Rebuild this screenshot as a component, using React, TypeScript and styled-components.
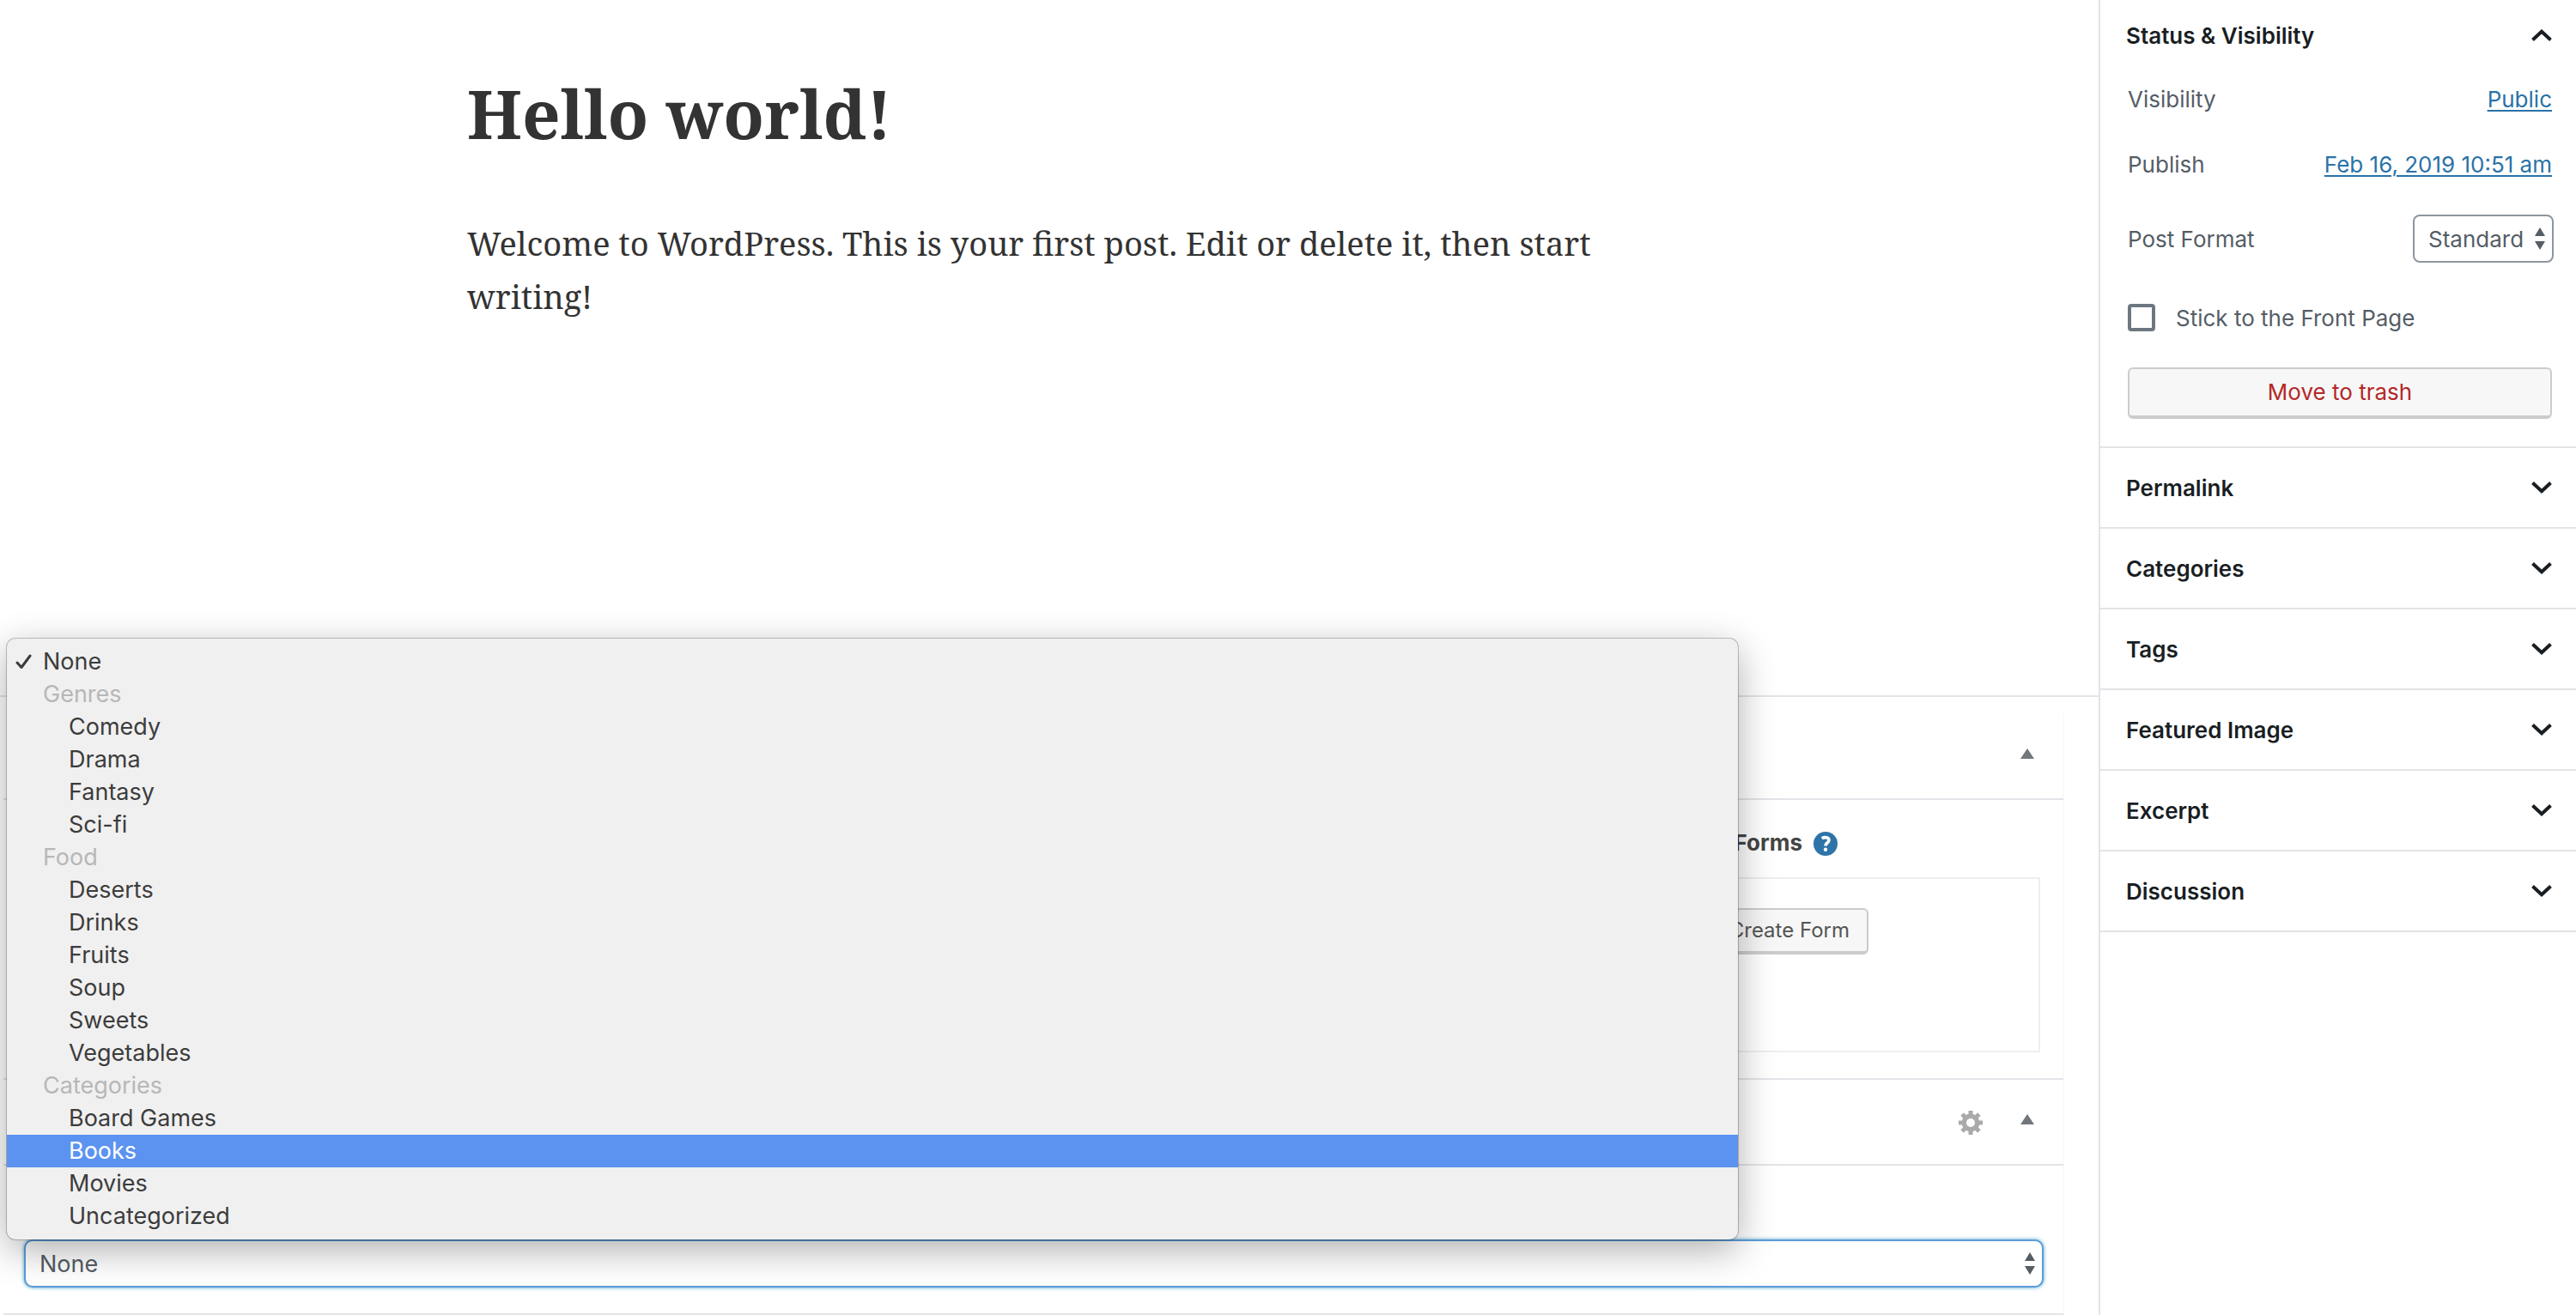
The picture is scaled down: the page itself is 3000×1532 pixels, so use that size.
import React, { useState } from "react";
import styled, { createGlobalStyle, css } from "styled-components";

const sans = `Inter, "Liberation Sans", sans-serif`;
const serif = `"Noto Serif", "DejaVu Serif", serif`;

const line = "#e2e4e7";

const GlobalStyle = createGlobalStyle`
  *, *::before, *::after { box-sizing: border-box; }
  body { margin: 0; background: #fff; font-family: ${sans}; color: #555d66; }
  button, select, input { font-family: inherit; margin: 0; }
`;

const Page = styled.div`
  display: flex;
  align-items: stretch;
  min-height: 100vh;
  overflow: hidden;
`;

const Main = styled.main`
  flex: 1;
  min-width: 0;
`;

const Editor = styled.article`
  min-height: 812px;
  padding: 70px 40px 0;
  border-bottom: 2px solid ${line};
`;

const EditorColumn = styled.div`
  max-width: 1356px;
  margin: 0 auto;
  font-family: ${serif};
  color: #333;
`;

const PostTitle = styled.h1`
  margin: 0;
  font-size: 78px;
  line-height: 124px;
  font-weight: 700;
`;

const Paragraph = styled.p`
  margin: 58px 0 0;
  font-size: 38px;
  line-height: 62px;
`;

const MetaBoxes = styled.div`
  margin: 20px 40px 0 4px;
  border-right: 1px solid #f6f6f8;
`;

const MetaBox = styled.section`
  border-bottom: 2px solid ${line};
`;

const MetaHeader = styled.header`
  display: flex;
  align-items: center;
  justify-content: flex-end;
  gap: 44px;
  height: 100px;
  padding: 0 34px 0 24px;
  border-bottom: 2px solid ${line};
`;

const IconButton = styled.button<{ $raised?: boolean }>`
  display: flex;
  padding: ${(p) => (p.$raised ? "0 0 6px" : "2px 0 0")};
  border: 0;
  background: none;
`;

const FormsBody = styled.div`
  padding: 36px 27px 30px 24px;
`;

const FormsTitle = styled.div`
  display: flex;
  align-items: center;
  justify-content: flex-end;
  gap: 13px;
  height: 28px;
  padding-right: 236px;
`;

const FormsHeading = styled.h2`
  margin: 0;
  font-size: 26px;
  line-height: 28px;
  font-weight: 700;
  color: #444;
`;

const FormsPanel = styled.div`
  display: flex;
  justify-content: flex-end;
  align-items: flex-start;
  height: 204px;
  margin-top: 26px;
  padding: 34px 198px 0 24px;
  border: 2px solid #eee;
`;

const Button = styled.button<{ $tone?: "danger" }>`
  height: 54px;
  padding: 0 20px;
  border: 2px solid #ccc;
  border-bottom-width: 4px;
  border-radius: 6px;
  background: #f7f7f7;
  color: #555;
  font-size: 24px;
  line-height: 30px;
  ${(p) =>
    p.$tone === "danger" &&
    css`
      width: 100%;
      height: 60px;
      color: #b52727;
      font-size: 26px;
    `}
`;

const TermBody = styled.div`
  padding: 86px 23px 30px 24px;
`;

const SelectWrap = styled.div`
  position: relative;
`;

const Select = styled.select<{ $focused?: boolean }>`
  display: block;
  appearance: none;
  width: 100%;
  height: 56px;
  padding: 0 32px 0 16px;
  border: 2px solid #8d96a0;
  border-radius: 8px;
  outline: 0;
  background: #fff;
  color: #555d66;
  font-size: 26px;
  ${(p) =>
    p.$focused &&
    css`
      border-color: #5b9dd9;
      border-radius: 10px;
      box-shadow: 0 0 4px rgba(30, 140, 190, 0.8);
      font-size: 27px;
    `}
`;

const SelectArrows = styled.svg`
  position: absolute;
  top: 15px;
  right: 9px;
  pointer-events: none;
`;

const Menu = styled.ul`
  position: absolute;
  left: -20px;
  right: 356px;
  bottom: 100%;
  margin: 0;
  padding: 8px 0;
  list-style: none;
  border-radius: 10px;
  background: #f0f0f0;
  box-shadow: 0 0 0 1px rgba(0, 0, 0, 0.22), 0 12px 44px rgba(0, 0, 0, 0.32);
  z-index: 2;
`;

const MenuItem = styled.li<{ $kind: "top" | "group" | "child"; $active?: boolean }>`
  display: flex;
  align-items: center;
  height: 38px;
  padding-left: ${(p) => (p.$kind === "child" ? 72 : p.$kind === "group" ? 42 : 10)}px;
  font-size: 27px;
  line-height: 38px;
  color: ${(p) => (p.$active ? "#fff" : p.$kind === "group" ? "#b7b7b7" : "#3c3c3c")};
  background: ${(p) => (p.$active ? "#5c93f0" : "transparent")};
`;

const CheckMark = styled.svg`
  margin-right: 13px;
`;

const Sidebar = styled.aside`
  flex: none;
  width: 556px;
  border-left: 2px solid ${line};
`;

const Panel = styled.section`
  border-bottom: 2px solid ${line};
`;

const PanelHeading = styled.h2`
  margin: 0;
`;

const PanelToggle = styled.button<{ $open?: boolean }>`
  display: flex;
  align-items: center;
  justify-content: space-between;
  width: 100%;
  height: ${(p) => (p.$open ? 82 : 92)}px;
  padding: 0 28px 0 30px;
  border: 0;
  background: none;
  color: #191e23;
  font-size: 26px;
  font-weight: 600;
  text-align: left;
`;

const PanelBody = styled.div`
  padding: 0 28px 32px 32px;
`;

const PanelRow = styled.div<{ $height: number }>`
  display: flex;
  align-items: center;
  justify-content: space-between;
  height: ${(p) => p.$height}px;
  font-size: 26px;
`;

const RowLink = styled.a`
  color: #2a72a8;
  text-decoration: underline;
  text-decoration-thickness: 2px;
  text-underline-offset: 3px;
`;

const FormatSelect = styled(SelectWrap)`
  width: 164px;
  margin-right: -2px;
`;

const CheckRow = styled.label`
  display: flex;
  align-items: center;
  gap: 24px;
  height: 96px;
  margin-bottom: 10px;
  font-size: 26px;
`;

const CheckBox = styled.input`
  appearance: none;
  width: 32px;
  height: 32px;
  border: 4px solid #6c7781;
  border-radius: 4px;
  background: #fff;
`;

const Chevron = ({ up }: { up?: boolean }) => (
  <svg width="24" height="14" viewBox="0 0 24 14" fill="none" stroke="#191e23" strokeWidth="4">
    <path d={up ? "M1.5 12.5L12 2.8L22.5 12.5" : "M1.5 1.5L12 11.2L22.5 1.5"} />
  </svg>
);

const Triangle = () => (
  <svg width="16" height="12" viewBox="0 0 16 12" fill="#72777c">
    <path d="M8 0L16 12H0Z" />
  </svg>
);

const Gear = () => (
  <svg width="28" height="28" viewBox="-14 -14 28 28">
    <g fill="#aaa">
      {[0, 45, 90, 135].map((a) => (
        <rect key={a} x="-2.5" y="-14" width="5" height="28" transform={`rotate(${a})`} />
      ))}
      <circle r="10.4" />
    </g>
    <circle r="5" fill="#fff" />
  </svg>
);

const HelpIcon = () => (
  <svg width="28" height="28" viewBox="0 0 28 28">
    <circle cx="14" cy="14" r="14" fill="#2e74a8" />
    <path d="M9.8 7.8C12.6 6 18 6.2 18 9.8C18 12.8 14 12.8 14 16.6" fill="none" stroke="#fff" strokeWidth="3.6" />
    <circle cx="14" cy="20.8" r="2.2" fill="#fff" />
  </svg>
);

const Arrows = () => (
  <SelectArrows width="14" height="26" viewBox="0 0 14 26" fill="#555d66">
    <path d="M7 0L13 10H1ZM1 16H13L7 26Z" />
  </SelectArrows>
);

const groups = [
  { label: "Genres", items: ["Comedy", "Drama", "Fantasy", "Sci-fi"] },
  { label: "Food", items: ["Deserts", "Drinks", "Fruits", "Soup", "Sweets", "Vegetables"] },
  { label: "Categories", items: ["Board Games", "Books", "Movies", "Uncategorized"] },
];

const panels = ["Permalink", "Categories", "Tags", "Featured Image", "Excerpt", "Discussion"];

function TermMenu({ active }: { active: string }) {
  return (
    <Menu role="listbox" aria-label="Terms">
      <MenuItem $kind="top" role="option" aria-selected>
        <CheckMark width="19" height="18" viewBox="0 0 19 18" fill="none" stroke="#3c3c3c" strokeWidth="3" strokeLinecap="round" strokeLinejoin="round">
          <path d="M2 10L7 15.5L17 2" />
        </CheckMark>
        None
      </MenuItem>
      {groups.map((g) => (
        <React.Fragment key={g.label}>
          <MenuItem $kind="group" role="presentation">{g.label}</MenuItem>
          {g.items.map((i) => (
            <MenuItem key={i} $kind="child" $active={i === active} role="option" aria-selected={false}>
              {i}
            </MenuItem>
          ))}
        </React.Fragment>
      ))}
    </Menu>
  );
}

export default function App() {
  const [term, setTerm] = useState("None");
  const [sticky, setSticky] = useState(false);
  return (
    <>
      <GlobalStyle />
      <Page>
        <Main>
          <Editor>
            <EditorColumn>
              <PostTitle>Hello world!</PostTitle>
              <Paragraph>
                Welcome to WordPress. This is your first post. Edit or delete it, then start writing!
              </Paragraph>
            </EditorColumn>
          </Editor>
          <MetaBoxes>
            <MetaBox>
              <MetaHeader>
                <IconButton $raised aria-label="Toggle panel"><Triangle /></IconButton>
              </MetaHeader>
              <FormsBody>
                <FormsTitle>
                  <FormsHeading>Forms</FormsHeading>
                  <IconButton aria-label="Help"><HelpIcon /></IconButton>
                </FormsTitle>
                <FormsPanel>
                  <Button>Create Form</Button>
                </FormsPanel>
              </FormsBody>
            </MetaBox>
            <MetaBox>
              <MetaHeader>
                <IconButton aria-label="Settings"><Gear /></IconButton>
                <IconButton $raised aria-label="Toggle panel"><Triangle /></IconButton>
              </MetaHeader>
              <TermBody>
                <SelectWrap>
                  <Select $focused aria-label="Term" value={term} onChange={(e) => setTerm(e.target.value)}>
                    <option>None</option>
                    {groups.map((g) => (
                      <optgroup key={g.label} label={g.label}>
                        {g.items.map((i) => <option key={i}>{i}</option>)}
                      </optgroup>
                    ))}
                  </Select>
                  <Arrows />
                  <TermMenu active="Books" />
                </SelectWrap>
              </TermBody>
            </MetaBox>
          </MetaBoxes>
        </Main>
        <Sidebar>
          <Panel>
            <PanelHeading>
              <PanelToggle $open aria-expanded>
                Status &amp; Visibility
                <Chevron up />
              </PanelToggle>
            </PanelHeading>
            <PanelBody>
              <PanelRow $height={66}>
                <span>Visibility</span>
                <RowLink href="#visibility">Public</RowLink>
              </PanelRow>
              <PanelRow $height={86}>
                <span>Publish</span>
                <RowLink href="#publish">Feb 16, 2019 10:51 am</RowLink>
              </PanelRow>
              <PanelRow $height={88}>
                <label htmlFor="post-format">Post Format</label>
                <FormatSelect>
                  <Select id="post-format" defaultValue="Standard">
                    <option>Standard</option>
                  </Select>
                  <Arrows />
                </FormatSelect>
              </PanelRow>
              <CheckRow>
                <CheckBox type="checkbox" checked={sticky} onChange={() => setSticky(!sticky)} />
                Stick to the Front Page
              </CheckRow>
              <Button $tone="danger">Move to trash</Button>
            </PanelBody>
          </Panel>
          {panels.map((name) => (
            <Panel key={name}>
              <PanelHeading>
                <PanelToggle aria-expanded={false}>
                  {name}
                  <Chevron />
                </PanelToggle>
              </PanelHeading>
            </Panel>
          ))}
        </Sidebar>
      </Page>
    </>
  );
}
